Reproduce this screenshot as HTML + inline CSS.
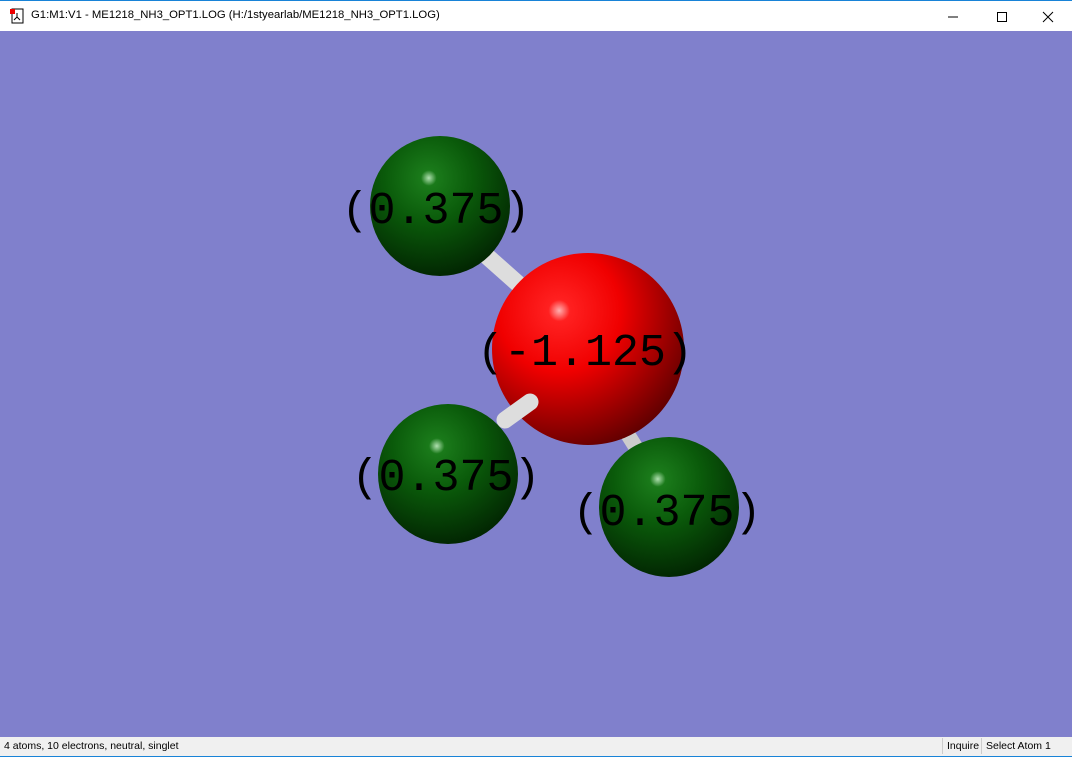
<!DOCTYPE html>
<html><head><style>
html,body{margin:0;padding:0;}
body{width:1072px;height:757px;position:relative;overflow:hidden;background:#fff;font-family:"Liberation Sans",sans-serif;}
.title{position:absolute;left:0;top:0;width:1072px;height:31px;background:#fff;border-top:1px solid #1883d7;box-sizing:border-box;}
.title span{position:absolute;left:31px;top:8px;font-size:11.3px;color:#000;}
.stat{position:absolute;left:0;top:737px;width:1072px;height:20px;background:#f0f0f0;font-size:10.5px;border-bottom:1px solid #1883d7;box-sizing:border-box;}
</style></head><body>
<div class="title">
<svg style="position:absolute;left:9px;top:7px" width="16" height="16"><rect x="3" y="1" width="11" height="14" fill="#fff" stroke="#000"/><rect x="1" y="1" width="5" height="5" fill="#e00"/><path d="M8 5 L8 9 L5 12 M8 9 L11 12" stroke="#000" fill="none"/></svg>
<span>G1:M1:V1 - ME1218_NH3_OPT1.LOG (H:/1styearlab/ME1218_NH3_OPT1.LOG)</span>
<svg style="position:absolute;left:940px;top:8px" width="120" height="16"><line x1="8" y1="8" x2="18" y2="8" stroke="#000"/><rect x="57.5" y="3.5" width="9" height="9" fill="none" stroke="#000"/><path d="M103 3 L113 13 M113 3 L103 13" stroke="#000"/></svg>
</div>
<svg style="position:absolute;left:0;top:31px" width="1072" height="706" viewBox="0 31 1072 706">
<defs>
<radialGradient id="r" cx="0.35" cy="0.3" r="0.8"><stop offset="0" stop-color="#ffb0b0"/><stop offset="0.07" stop-color="#ff2020"/><stop offset="0.4" stop-color="#f00000"/><stop offset="1" stop-color="#500000"/></radialGradient>
<radialGradient id="g" cx="0.42" cy="0.3" r="0.8"><stop offset="0" stop-color="#b0e0b0"/><stop offset="0.07" stop-color="#1a7a1a"/><stop offset="0.4" stop-color="#0a5a0a"/><stop offset="1" stop-color="#001a00"/></radialGradient>
</defs>
<rect x="0" y="31" width="1072" height="706" fill="#8080cc"/>
<line x1="480" y1="250" x2="525" y2="290" stroke="#ddd" stroke-width="17" stroke-linecap="round"/>
<line x1="625" y1="430" x2="645" y2="462" stroke="#ccc" stroke-width="15" stroke-linecap="round"/>
<circle cx="440" cy="206" r="70" fill="url(#g)"/>
<circle cx="588" cy="349" r="96" fill="url(#r)"/>
<line x1="505" y1="420" x2="530" y2="402" stroke="#ddd" stroke-width="17" stroke-linecap="round"/>
<circle cx="448" cy="474" r="70" fill="url(#g)"/>
<circle cx="669" cy="507" r="70" fill="url(#g)"/>
<g font-family="Liberation Mono,monospace" font-size="45" fill="#000" text-anchor="middle">
<text x="436" y="223">(0.375)</text>
<text x="585" y="365">(-1.125)</text>
<text x="446" y="490">(0.375)</text>
<text x="667" y="525">(0.375)</text>
</g>
</svg>
<div class="stat">
<span style="position:absolute;left:4px;top:3px">4 atoms, 10 electrons, neutral, singlet</span>
<span style="position:absolute;left:942px;top:1px;height:16px;border-left:1px solid #ccc"></span>
<span style="position:absolute;left:947px;top:3px">Inquire</span>
<span style="position:absolute;left:981px;top:1px;height:16px;border-left:1px solid #ccc"></span>
<span style="position:absolute;left:986px;top:3px">Select Atom 1</span>
</div>
</body></html>
